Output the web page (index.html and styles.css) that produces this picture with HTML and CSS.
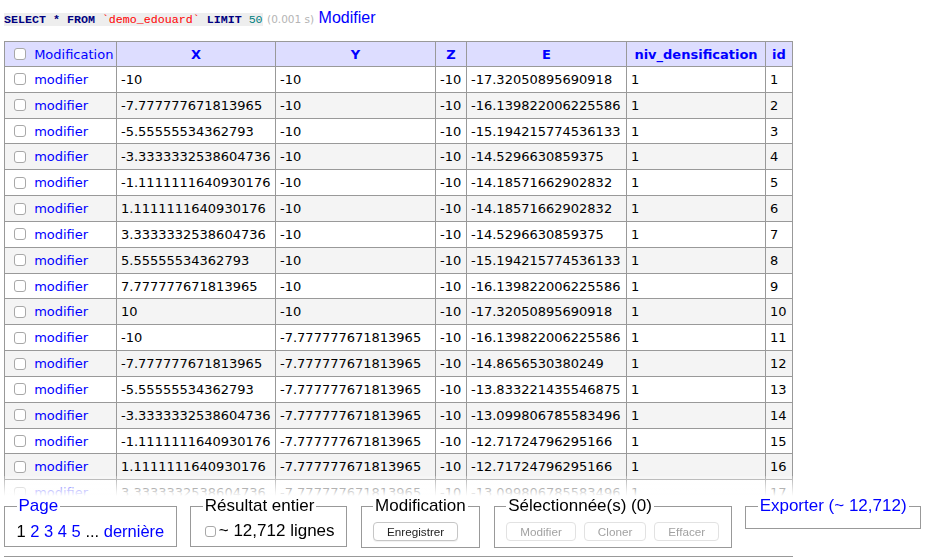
FILE: index.html
```html
<!DOCTYPE html>
<html lang="fr">
<head>
<meta charset="utf-8">
<title>Sélectionner: demo_edouard</title>
<link rel="stylesheet" href="styles.css">
</head>
<body>
<div class="app">
  <p class="query"><code class="sql"><b class="kw">SELECT</b> <b class="kw">*</b> <b class="kw">FROM</b> <span class="ident">`demo_edouard`</span> <b class="kw">LIMIT</b> <span class="num">50</span></code> <span class="time">(0.001 s)</span> <a href="#" class="edit">Modifier</a></p>
  <table class="grid">
    <colgroup>
      <col class="c-mod"><col class="c-x"><col class="c-y"><col class="c-z"><col class="c-e"><col class="c-niv"><col class="c-id">
    </colgroup>
    <thead>
      <tr><th class="sel"><input type="checkbox" class="ck"> <a href="#">Modification</a></th><th><a href="#">X</a></th><th><a href="#">Y</a></th><th><a href="#">Z</a></th><th><a href="#">E</a></th><th><a href="#">niv_densification</a></th><th><a href="#">id</a></th></tr>
    </thead>
    <tbody>
      <tr><td><input type="checkbox" class="ck"> <a href="#">modifier</a></td><td>-10</td><td>-10</td><td>-10</td><td>-17.32050895690918</td><td>1</td><td>1</td></tr>
      <tr><td><input type="checkbox" class="ck"> <a href="#">modifier</a></td><td>-7.777777671813965</td><td>-10</td><td>-10</td><td>-16.139822006225586</td><td>1</td><td>2</td></tr>
      <tr><td><input type="checkbox" class="ck"> <a href="#">modifier</a></td><td>-5.55555534362793</td><td>-10</td><td>-10</td><td>-15.194215774536133</td><td>1</td><td>3</td></tr>
      <tr><td><input type="checkbox" class="ck"> <a href="#">modifier</a></td><td>-3.3333332538604736</td><td>-10</td><td>-10</td><td>-14.5296630859375</td><td>1</td><td>4</td></tr>
      <tr><td><input type="checkbox" class="ck"> <a href="#">modifier</a></td><td>-1.1111111640930176</td><td>-10</td><td>-10</td><td>-14.18571662902832</td><td>1</td><td>5</td></tr>
      <tr><td><input type="checkbox" class="ck"> <a href="#">modifier</a></td><td>1.1111111640930176</td><td>-10</td><td>-10</td><td>-14.18571662902832</td><td>1</td><td>6</td></tr>
      <tr><td><input type="checkbox" class="ck"> <a href="#">modifier</a></td><td>3.3333332538604736</td><td>-10</td><td>-10</td><td>-14.5296630859375</td><td>1</td><td>7</td></tr>
      <tr><td><input type="checkbox" class="ck"> <a href="#">modifier</a></td><td>5.55555534362793</td><td>-10</td><td>-10</td><td>-15.194215774536133</td><td>1</td><td>8</td></tr>
      <tr><td><input type="checkbox" class="ck"> <a href="#">modifier</a></td><td>7.777777671813965</td><td>-10</td><td>-10</td><td>-16.139822006225586</td><td>1</td><td>9</td></tr>
      <tr><td><input type="checkbox" class="ck"> <a href="#">modifier</a></td><td>10</td><td>-10</td><td>-10</td><td>-17.32050895690918</td><td>1</td><td>10</td></tr>
      <tr><td><input type="checkbox" class="ck"> <a href="#">modifier</a></td><td>-10</td><td>-7.777777671813965</td><td>-10</td><td>-16.139822006225586</td><td>1</td><td>11</td></tr>
      <tr><td><input type="checkbox" class="ck"> <a href="#">modifier</a></td><td>-7.777777671813965</td><td>-7.777777671813965</td><td>-10</td><td>-14.8656530380249</td><td>1</td><td>12</td></tr>
      <tr><td><input type="checkbox" class="ck"> <a href="#">modifier</a></td><td>-5.55555534362793</td><td>-7.777777671813965</td><td>-10</td><td>-13.833221435546875</td><td>1</td><td>13</td></tr>
      <tr><td><input type="checkbox" class="ck"> <a href="#">modifier</a></td><td>-3.3333332538604736</td><td>-7.777777671813965</td><td>-10</td><td>-13.099806785583496</td><td>1</td><td>14</td></tr>
      <tr><td><input type="checkbox" class="ck"> <a href="#">modifier</a></td><td>-1.1111111640930176</td><td>-7.777777671813965</td><td>-10</td><td>-12.71724796295166</td><td>1</td><td>15</td></tr>
      <tr><td><input type="checkbox" class="ck"> <a href="#">modifier</a></td><td>1.1111111640930176</td><td>-7.777777671813965</td><td>-10</td><td>-12.71724796295166</td><td>1</td><td>16</td></tr>
      <tr><td><input type="checkbox" class="ck"> <a href="#">modifier</a></td><td>3.3333332538604736</td><td>-7.777777671813965</td><td>-10</td><td>-13.099806785583496</td><td>1</td><td>17</td></tr>
      <tr><td><input type="checkbox" class="ck"> <a href="#">modifier</a></td><td>5.55555534362793</td><td>-7.777777671813965</td><td>-10</td><td>-13.833221435546875</td><td>1</td><td>18</td></tr>
      <tr><td><input type="checkbox" class="ck"> <a href="#">modifier</a></td><td>7.777777671813965</td><td>-7.777777671813965</td><td>-10</td><td>-14.8656530380249</td><td>1</td><td>19</td></tr>
    </tbody>
  </table>
  <div class="footer">
    <div class="bar">
      <fieldset class="fs">
        <legend><a href="#">Page</a></legend>
        <div class="fs-body pages">1 <a href="#">2</a> <a href="#">3</a> <a href="#">4</a> <a href="#">5</a> ... <a href="#">dernière</a></div>
      </fieldset>
      <fieldset class="fs">
        <legend>Résultat entier</legend>
        <div class="fs-body"><label><input type="checkbox" class="ck ck-small">~ 12,712 lignes</label></div>
      </fieldset>
      <fieldset class="fs">
        <legend>Modification</legend>
        <div class="fs-body"><button type="button" class="btn">Enregistrer</button></div>
      </fieldset>
      <fieldset class="fs">
        <legend>Sélectionnée(s) (0)</legend>
        <div class="fs-body btns"><button type="button" class="btn" disabled>Modifier</button><button type="button" class="btn" disabled>Cloner</button><button type="button" class="btn" disabled>Effacer</button></div>
      </fieldset>
      <fieldset class="fs">
        <legend><a href="#">Exporter (~ 12,712)</a></legend>
      </fieldset>
    </div>
  </div>
</div>
</body>
</html>
```
FILE: styles.css
```css
html, body {
  margin: 0;
  padding: 0;
  background: #fff;
  overflow: hidden;
}
body {
  font: 13px "DejaVu Sans", Verdana, sans-serif;
  color: #000;
}
a {
  color: #00f;
  text-decoration: none;
}
.app {
  height: 557px;
  overflow: hidden;
  padding-left: 4px;
  box-sizing: border-box;
}

/* query line */
.query {
  margin: 0;
  padding-top: 9px;
  font: 16px "Liberation Sans", Arial, sans-serif;
  line-height: 18px;
  white-space: nowrap;
}
.sql {
  font: 11.65px "Liberation Mono", "DejaVu Sans Mono", monospace;
  line-height: 1;
  background: #eee;
}
.kw { color: #000080; font-weight: bold; }
.ident { color: #f00; }
.num { color: #008080; }
.time {
  font: 10.5px "DejaVu Sans", Verdana, sans-serif;
  color: #b4b4b4;
}

/* grid */
.grid {
  margin-top: 14px;
  border-collapse: separate;
  border-spacing: 0;
  table-layout: fixed;
  width: 789px;
  border-top: 1px solid #999;
  border-left: 1px solid #999;
}
.c-mod { width: 112px; }
.c-x { width: 159px; }
.c-y { width: 160px; }
.c-z { width: 31px; }
.c-e { width: 160px; }
.c-niv { width: 139px; }
.c-id { width: 27px; }
.grid th,
.grid td {
  border-right: 1px solid #999;
  border-bottom: 1px solid #999;
  padding: 0 4px;
  white-space: nowrap;
  overflow: hidden;
  vertical-align: middle;
}
.grid thead tr { height: 25px; }
.grid tbody tr { height: 25.84px; }
.grid th {
  background: #ddf;
  font-weight: bold;
  text-align: center;
}
.grid th.sel {
  font-weight: normal;
  text-align: left;
}
.grid td { text-align: left; }
.grid tbody tr:nth-child(even) td { background: #f4f4f4; }

.ck {
  -webkit-appearance: none;
  appearance: none;
  box-sizing: border-box;
  width: 12px;
  height: 12px;
  margin: 0 4px 0 5px;
  border: 1px solid #a8a8a8;
  border-radius: 3px;
  background: #fff;
  vertical-align: middle;
  position: relative;
  top: -1px;
}
.ck-small {
  width: 11px;
  height: 11px;
  margin: 0 3px 0 2px;
  top: 0;
}

/* sticky footer */
.footer {
  position: sticky;
  bottom: 0;
  width: 789px;
  padding-top: 20px;
  background: linear-gradient(rgba(255, 255, 255, 0.2), #fff 20px);
}
.bar {
  display: flex;
  align-items: flex-start;
  gap: 13.5px;
  padding: 1px 0 8px;
  border-bottom: 1px solid #999;
  font: 17px "Liberation Sans", Arial, sans-serif;
  line-height: 18px;
  white-space: nowrap;
}
.fs {
  flex: none;
  margin: 0;
  padding: 7px 11.5px 6px;
  border: 1px solid #999;
  min-inline-size: auto;
}
.fs legend {
  padding: 0 2px;
}
.pages {
  font-size: 16.5px;
}
.btns {
  display: flex;
  gap: 8px;
}
.btn {
  box-sizing: border-box;
  height: 19px;
  padding: 0 13px;
  font: 11.7px "Liberation Sans", Arial, sans-serif;
  line-height: 17px;
  color: #222;
  background: #fff;
  border: 1px solid #c6c6c6;
  border-radius: 4px;
  box-shadow: 0 1px 1px rgba(0, 0, 0, 0.06);
  vertical-align: top;
}
.btn:disabled {
  color: #a2a2a2;
  border-color: #e2e2e2;
  box-shadow: none;
}
```
